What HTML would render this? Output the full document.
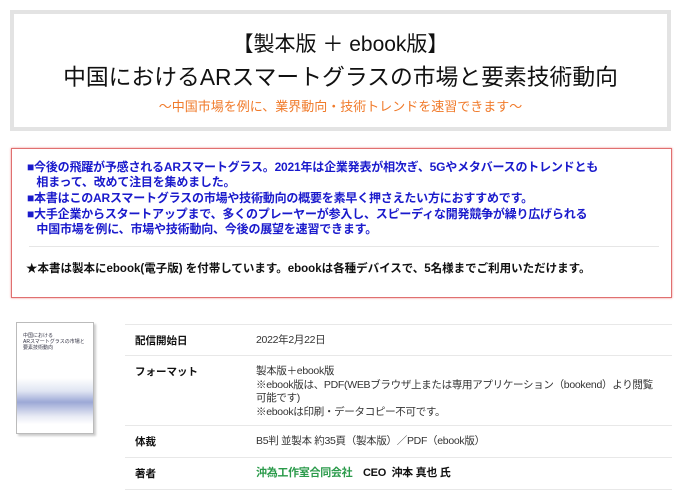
<!DOCTYPE html>
<html><head><meta charset="utf-8"><style>
*{margin:0;padding:0;box-sizing:border-box}
body{width:700px;height:494px;background:#fff;font-family:"Liberation Sans","Noto Sans CJK JP",sans-serif;position:relative;overflow:hidden;color:#222}
.hd{position:absolute;left:10px;top:10px;width:661px;height:121px;border:4px solid #e3e3e3;text-align:center}
.t1{position:absolute;top:14px;width:100%;font-size:21px;color:#111}
.t2{position:absolute;top:45px;width:100%;font-size:22.8px;color:#111}
.t3{position:absolute;top:82px;width:100%;font-size:13px;color:#f07a2a}
.rb{position:absolute;left:11px;top:148px;width:661px;height:150px;border:1px solid #e07070;box-shadow:0 0 2px #e88}
.bl{position:absolute;left:15px;font-size:12px;color:#1a1acc;line-height:15px;font-weight:bold;letter-spacing:-0.2px}
.dv{position:absolute;left:17px;top:97px;width:630px;border-top:1px solid #e6e6e6}
.st{position:absolute;left:14px;top:111px;font-size:11.5px;font-weight:bold;color:#111}
.bk{position:absolute;left:16px;top:322px;width:78px;height:112px;border:1px solid #bbb;box-shadow:2px 2px 2px #ccc;background:linear-gradient(#fff 50%,#dfe4f2 62%,#9ca8d6 72%,#e8ebf5 85%,#fff 92%)}
.bk p{font-size:5px;color:#334;position:absolute;left:6px;line-height:6px}
.tb{position:absolute;left:125px;top:324px;width:547px}
.r{border-top:1px solid #e8e8e8;position:relative;font-size:10.5px}
.r .l{position:absolute;left:10px;top:9px;line-height:14px;font-weight:bold;color:#111}
.r .v{position:absolute;left:131px;top:9px;line-height:13.5px;color:#333;letter-spacing:-0.3px;white-space:nowrap}
</style></head><body>
<div class="hd">
<div class="t1">【製本版 ＋ ebook版】</div>
<div class="t2">中国におけるARスマートグラスの市場と要素技術動向</div>
<div class="t3">～中国市場を例に、業界動向・技術トレンドを速習できます～</div>
</div>
<div class="rb">
<div class="bl" style="top:11px">■今後の飛躍が予感されるARスマートグラス。2021年は企業発表が相次ぎ、5Gやメタバースのトレンドとも<br>&nbsp;&nbsp;&nbsp;相まって、改めて注目を集めました。</div>
<div class="bl" style="top:42px">■本書はこのARスマートグラスの市場や技術動向の概要を素早く押さえたい方におすすめです。</div>
<div class="bl" style="top:58px">■大手企業からスタートアップまで、多くのプレーヤーが参入し、スピーディな開発競争が繰り広げられる<br>&nbsp;&nbsp;&nbsp;中国市場を例に、市場や技術動向、今後の展望を速習できます。</div>
<div class="dv"></div>
<div class="st">★本書は製本にebook(電子版) を付帯しています。ebookは各種デバイスで、5名様までご利用いただけます。</div>
</div>
<div class="bk"><p style="top:10px">中国における<br>ARスマートグラスの市場と<br>要素技術動向</p></div>
<div class="tb">
<div class="r" style="height:31px"><span class="l">配信開始日</span><span class="v">2022年2月22日</span></div>
<div class="r" style="height:70px"><span class="l">フォーマット</span><span class="v">製本版＋ebook版<br>※ebook版は、PDF(WEBブラウザ上または専用アプリケーション（bookend）より閲覧<br>可能です)<br>※ebookは印刷・データコピー不可です。</span></div>
<div class="r" style="height:32px"><span class="l">体裁</span><span class="v">B5判 並製本 約35頁（製本版）／PDF（ebook版）</span></div>
<div class="r" style="height:33px;border-bottom:1px solid #e8e8e8"><span class="l">著者</span><span class="v" style="font-weight:bold;color:#111;font-size:11px"><span style="color:#2a9a4a">沖為工作室合同会社</span>　CEO&nbsp; 沖本 真也 氏</span></div>
</div>
</body></html>
